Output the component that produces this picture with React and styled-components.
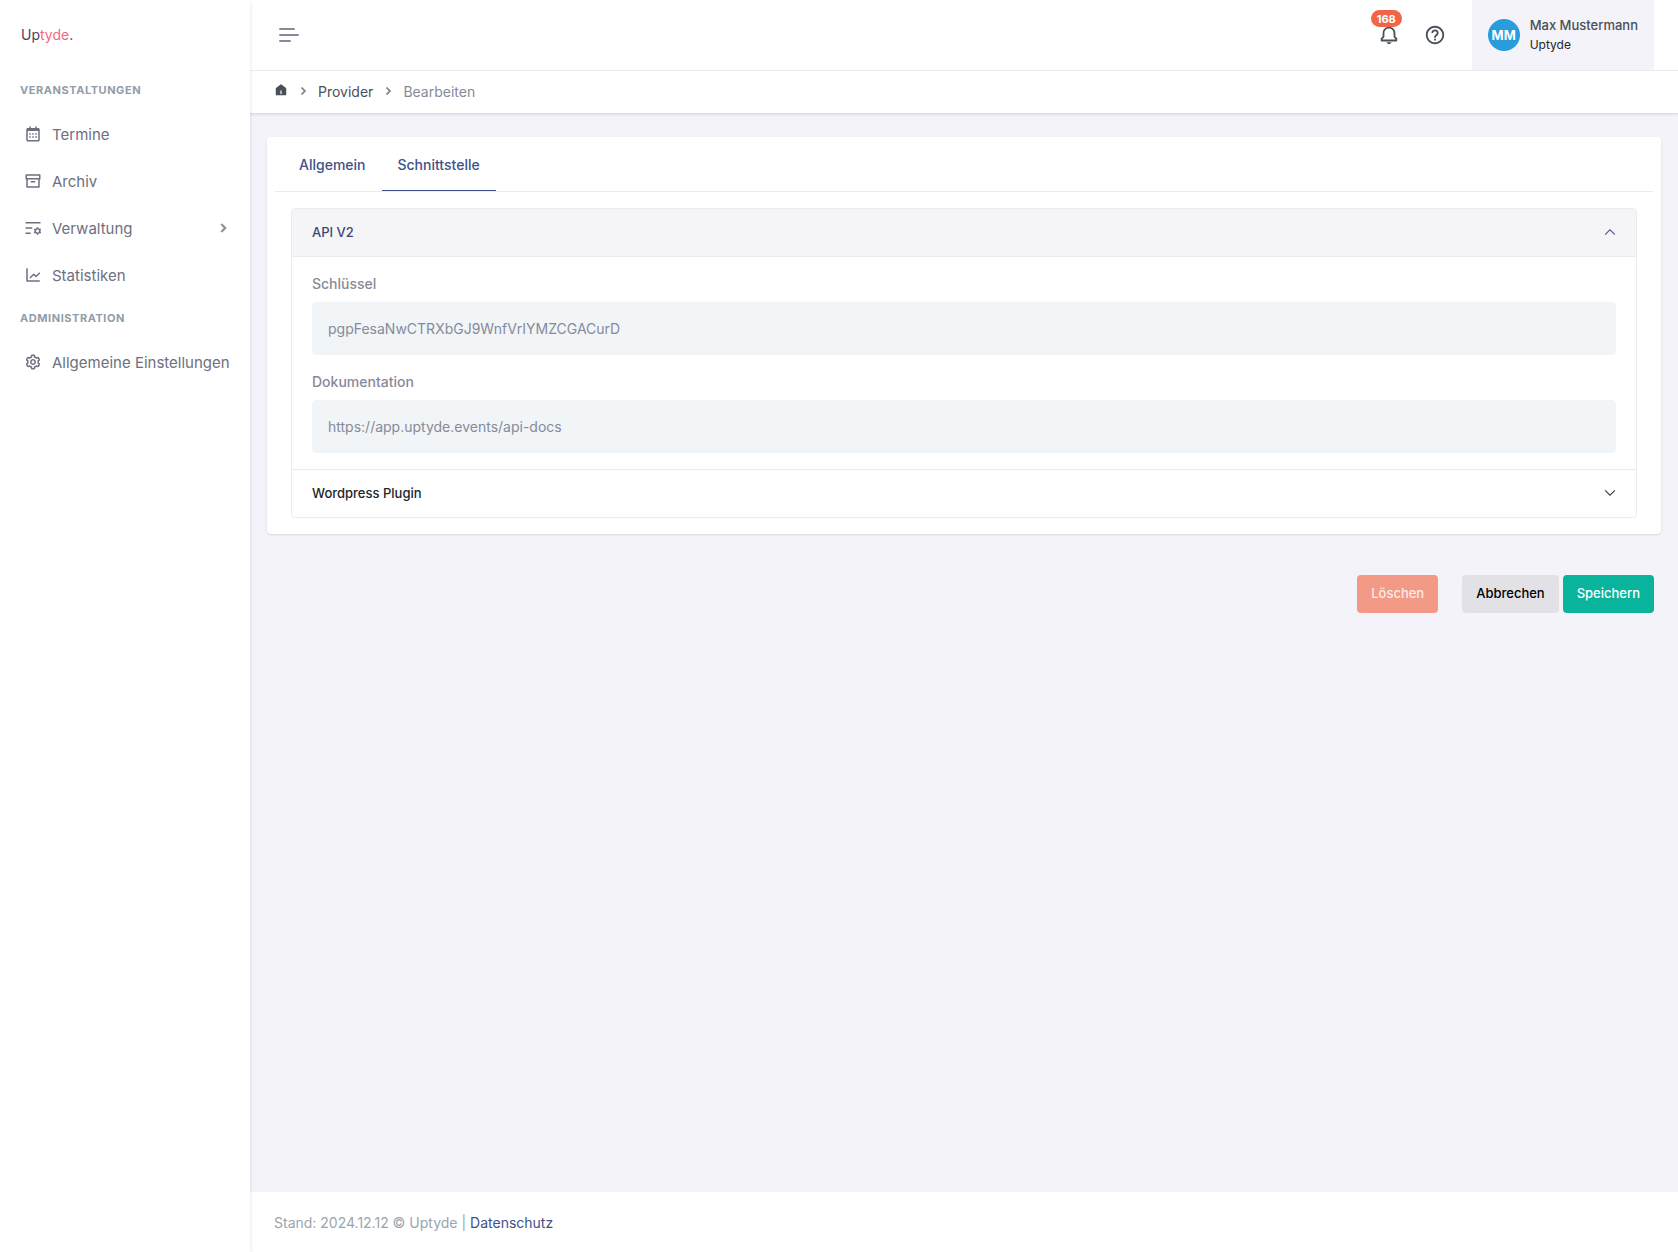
import React, { useState } from 'react';
import styled, { createGlobalStyle } from 'styled-components';
import { BiBell, BiCalendar, BiChevronRight, BiCog, BiHelpCircle, BiLineChart } from 'react-icons/bi';
import { RiArchiveLine, RiHome5Fill, RiListSettingsLine } from 'react-icons/ri';
import { BsChevronDown } from 'react-icons/bs';

const GlobalStyle = createGlobalStyle`
  *, *::before, *::after {
    box-sizing: border-box;
  }

  body {
    margin: 0;
    background-color: #f3f3f9;
    color: #212529;
    font-family: Inter, 'Liberation Sans', sans-serif;
    font-size: 14px;
    line-height: 21px;
  }

  button, input {
    font-family: inherit;
  }
`;

const Layout = styled.div`
  display: flex;
  min-height: 100vh;
`;

const Sidebar = styled.aside`
  width: 250px;
  flex-shrink: 0;
  background-color: #fff;
  box-shadow: 0 2px 4px rgba(15, 34, 58, 0.12);
  z-index: 1;
`;

const Brand = styled.a`
  display: flex;
  align-items: center;
  height: 70px;
  padding: 0 21px 2px;
  color: #4b4066;
  font-size: 14px;
  text-decoration: none;

  span {
    color: #f7667c;
  }
`;

const MenuTitle = styled.h2`
  margin: 0;
  padding: 0 20px;
  color: #919da9;
  font-size: 11px;
  font-weight: 700;
  line-height: 40px;
  letter-spacing: 0.05em;
  text-transform: uppercase;
`;

const MenuList = styled.ul`
  margin: 0;
  padding: 0;
  list-style: none;
`;

const MenuLink = styled.a`
  display: flex;
  align-items: center;
  height: 47px;
  padding: 0 18px 0 24px;
  color: #6d7080;
  font-size: 15px;
  text-decoration: none;

  span {
    flex: 1;
    margin-left: 10px;
    padding-top: 2px;
    white-space: nowrap;
  }

  &:hover {
    color: #405189;
  }
`;

const Chevron = styled(BiChevronRight)`
  stroke: currentColor;
  stroke-width: 1px;
  color: #878a99;
`;

const Main = styled.div`
  display: flex;
  flex: 1;
  flex-direction: column;
  min-width: 0;
`;

const Topbar = styled.header`
  display: flex;
  align-items: center;
  height: 71px;
  padding: 0 24px 0 29px;
  background-color: #fff;
  border-bottom: 1px solid #e9ebf5;
`;

const IconButton = styled.button`
  position: relative;
  display: flex;
  align-items: center;
  justify-content: center;
  width: 46px;
  height: 42px;
  padding: 0;
  border: none;
  background: none;
  color: #495057;
  cursor: pointer;
`;

const MenuToggle = styled.button`
  display: flex;
  flex-direction: column;
  gap: 4px;
  padding: 0;
  border: none;
  background: none;
  cursor: pointer;
`;

const ToggleBar = styled.span`
  width: ${({ $width }) => $width}px;
  height: 2px;
  border-radius: 2px;
  background-color: #878a99;
`;

const Tools = styled.div`
  display: flex;
  align-items: center;
  margin-left: auto;
`;

const Badge = styled.span`
  position: absolute;
  top: -4px;
  left: 5px;
  padding: 1px 6px 0;
  border-radius: 10px;
  background-color: #f06548;
  color: #fff;
  font-size: 11px;
  font-weight: 700;
  line-height: 16px;
`;

const UserButton = styled.button`
  display: flex;
  align-items: center;
  gap: 10px;
  height: 70px;
  margin-left: 14px;
  padding: 0 16px;
  border: none;
  background-color: #f3f3f9;
  text-align: left;
  cursor: pointer;
`;

const Avatar = styled.span`
  width: 32px;
  height: 32px;
  border-radius: 50%;
  background-color: #299cdb;
  color: #fff;
  font-size: 13px;
  font-weight: 700;
  line-height: 32px;
  text-align: center;
`;

const UserName = styled.span`
  display: block;
  color: #495057;
  font-size: 13px;
  font-weight: 500;
  line-height: 19px;
`;

const UserCompany = styled.span`
  display: block;
  color: #212529;
  font-size: 12px;
  line-height: 19px;
`;

const Breadcrumb = styled.nav`
  display: flex;
  align-items: center;
  gap: 7px;
  height: 43px;
  padding: 0 24px 2px;
  background-color: #fff;
  border-bottom: 1px solid #dcdde4;
  box-shadow: 0 1px 2px rgba(56, 65, 74, 0.1);
  color: #878a99;

  a {
    color: #495057;
    text-decoration: none;
  }
`;

const Content = styled.main`
  flex: 1;
  padding: 23px 17px;
`;

const Card = styled.section`
  padding: 0 8px 16px;
  border-radius: 4px;
  background-color: #fff;
  box-shadow: 0 1px 2px rgba(56, 65, 74, 0.15);
`;

const Tabs = styled.div`
  display: flex;
  padding: 0 8px;
  border-bottom: 1px solid #e9ebec;
`;

const Tab = styled.button`
  height: 54px;
  padding: 2px 16px 0;
  border: none;
  border-bottom: 1px solid ${({ $active }) => ($active ? '#405189' : 'transparent')};
  background: none;
  color: #405189;
  font-size: 14px;
  font-weight: 500;
  cursor: pointer;
`;

const Accordion = styled.div`
  margin: 16px 16px 0;
  border: 1px solid #e9ebec;
  border-radius: 4px;
  overflow: hidden;
`;

const AccordionButton = styled.button`
  display: flex;
  align-items: center;
  justify-content: space-between;
  width: 100%;
  height: 47px;
  padding: 0 20px 2px;
  border: none;
  background-color: ${({ $open }) => ($open ? '#f5f5f8' : '#fff')};
  color: ${({ $open }) => ($open ? '#3a497b' : '#212529')};
  font-size: 13px;
  font-weight: 500;
  cursor: pointer;

  svg {
    stroke: currentColor;
    stroke-width: 0.5px;
    transform: ${({ $open }) => ($open ? 'rotate(180deg)' : 'none')};
  }
`;

const AccordionBody = styled.div`
  padding: 16px 20px;
  border-top: 1px solid #e9ebec;
  border-bottom: 1px solid #e9ebec;
`;

const Field = styled.div`
  & + & {
    margin-top: 16px;
  }

  label {
    display: block;
    margin-bottom: 8px;
    color: #878a99;
    font-weight: 500;
  }

  input {
    display: block;
    width: 100%;
    height: 53px;
    padding: 0 16px;
    border: none;
    border-radius: 4px;
    outline: none;
    background-color: #f1f5f8;
    color: #878a99;
    font-size: 14px;
  }
`;

const Actions = styled.div`
  display: flex;
  justify-content: flex-end;
  gap: 4px;
  margin-top: 41px;
  padding: 0 7px;
`;

const buttonStyles = {
  danger: { background: '#f39a87', color: '#fdeae6' },
  light: { background: '#e1e1e6', color: '#000' },
  success: { background: '#0ab39c', color: '#fff' },
};

const Button = styled.button`
  height: 38px;
  margin-right: ${({ $variant }) => ($variant === 'danger' ? '20px' : '0')};
  padding: 0 14px 2px;
  border: none;
  border-radius: 4px;
  background-color: ${({ $variant }) => buttonStyles[$variant].background};
  color: ${({ $variant }) => buttonStyles[$variant].color};
  font-size: 13px;
  font-weight: 500;
  cursor: pointer;
`;

const Footer = styled.footer`
  height: 60px;
  padding: 20px 24px;
  background-color: #fff;
  color: #98a6ad;

  a {
    color: #405189;
    text-decoration: none;
  }
`;

const events = [
  { label: 'Termine', icon: BiCalendar },
  { label: 'Archiv', icon: RiArchiveLine },
  { label: 'Verwaltung', icon: RiListSettingsLine, hasChildren: true },
  { label: 'Statistiken', icon: BiLineChart },
];

const administration = [{ label: 'Allgemeine Einstellungen', icon: BiCog }];

const tabs = ['Allgemein', 'Schnittstelle'];

const Menu = ({ items }) => (
  <MenuList>
    {items.map(({ label, icon: Icon, hasChildren }) => (
      <li key={label}>
        <MenuLink href="#">
          <Icon size={18} />
          <span>{label}</span>
          {hasChildren && <Chevron size={18} />}
        </MenuLink>
      </li>
    ))}
  </MenuList>
);

const App = () => {
  const [activeTab, setActiveTab] = useState('Schnittstelle');
  const [openItem, setOpenItem] = useState('api');

  return (
    <>
      <GlobalStyle />
      <Layout>
        <Sidebar>
          <Brand href="#">
            Up<span>tyde</span>.
          </Brand>
          <MenuTitle>Veranstaltungen</MenuTitle>
          <Menu items={events} />
          <MenuTitle>Administration</MenuTitle>
          <Menu items={administration} />
        </Sidebar>
        <Main>
          <Topbar>
            <MenuToggle aria-label="Menü">
              <ToggleBar $width={16} />
              <ToggleBar $width={20} />
              <ToggleBar $width={12} />
            </MenuToggle>
            <Tools>
              <IconButton aria-label="Benachrichtigungen">
                <BiBell size={22} />
                <Badge>168</Badge>
              </IconButton>
              <IconButton aria-label="Hilfe">
                <BiHelpCircle size={22} />
              </IconButton>
              <UserButton>
                <Avatar>MM</Avatar>
                <span>
                  <UserName>Max Mustermann</UserName>
                  <UserCompany>Uptyde</UserCompany>
                </span>
              </UserButton>
            </Tools>
          </Topbar>
          <Breadcrumb aria-label="Breadcrumb">
            <a href="#" aria-label="Startseite">
              <RiHome5Fill size={14} />
            </a>
            <Chevron size={16} />
            <a href="#">Provider</a>
            <Chevron size={16} />
            <span>Bearbeiten</span>
          </Breadcrumb>
          <Content>
            <Card>
              <Tabs role="tablist">
                {tabs.map((tab) => (
                  <Tab
                    key={tab}
                    role="tab"
                    aria-selected={tab === activeTab}
                    $active={tab === activeTab}
                    onClick={() => setActiveTab(tab)}
                  >
                    {tab}
                  </Tab>
                ))}
              </Tabs>
              <Accordion>
                <AccordionButton $open={openItem === 'api'} onClick={() => setOpenItem('api')}>
                  API V2
                  <BsChevronDown size={12} />
                </AccordionButton>
                {openItem === 'api' && (
                  <AccordionBody>
                    <Field>
                      <label htmlFor="api-key">Schlüssel</label>
                      <input id="api-key" readOnly value="pgpFesaNwCTRXbGJ9WnfVrIYMZCGACurD" />
                    </Field>
                    <Field>
                      <label htmlFor="api-docs">Dokumentation</label>
                      <input id="api-docs" readOnly value="https://app.uptyde.events/api-docs" />
                    </Field>
                  </AccordionBody>
                )}
                <AccordionButton $open={openItem === 'wordpress'} onClick={() => setOpenItem('wordpress')}>
                  Wordpress Plugin
                  <BsChevronDown size={12} />
                </AccordionButton>
              </Accordion>
            </Card>
            <Actions>
              <Button $variant="danger">Löschen</Button>
              <Button $variant="light">Abbrechen</Button>
              <Button $variant="success">Speichern</Button>
            </Actions>
          </Content>
          <Footer>
            Stand: 2024.12.12 © Uptyde | <a href="#">Datenschutz</a>
          </Footer>
        </Main>
      </Layout>
    </>
  );
};

export default App;
